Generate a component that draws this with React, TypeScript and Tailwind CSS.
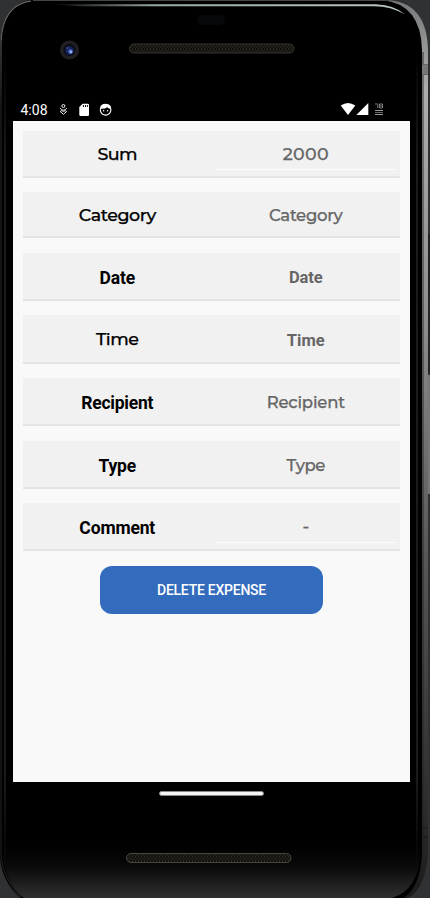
import React from "react";

const geo = "font-['Montserrat','Inter',sans-serif] font-medium [-webkit-text-stroke:0.25px_currentColor]";
const rob = "font-['Roboto',sans-serif] font-bold";

type Row = {
  label: string;
  value: string;
  box: string;
  labelClass: string;
  valueClass: string;
  input?: boolean;
};

const rows: Row[] = [
  { label: "Sum", value: "2000", box: "h-[47px] mb-[14px]", labelClass: `${geo} text-[17.5px] tracking-[-0.5px] pt-[2px]`, valueClass: `${geo} text-[17.5px] tracking-[0.3px]`, input: true },
  { label: "Category", value: "Category", box: "h-[46px] mb-[15px]", labelClass: `${geo} text-[17.5px] tracking-[-0.45px] pt-[2px]`, valueClass: `${geo} text-[16.5px] tracking-[-0.3px] pt-[2px]` },
  { label: "Date", value: "Date", box: "h-[48px] mb-[14px]", labelClass: `${rob} text-[17.5px] tracking-[-0.2px] pt-[4px]`, valueClass: `${rob} text-[16.5px] tracking-[-0.1px] pt-[4px]` },
  { label: "Time", value: "Time", box: "h-[49px] mb-[14px]", labelClass: `${geo} text-[17.5px] tracking-[-0.5px] pt-[1px]`, valueClass: `${rob} text-[16.5px] pt-[5px]` },
  { label: "Recipient", value: "Recipient", box: "h-[48px] mb-[15px]", labelClass: `${rob} text-[17.5px] tracking-[-0.25px] pt-[4px]`, valueClass: `${geo} text-[16.5px] tracking-[-0.2px] pt-[2px]` },
  { label: "Type", value: "Type", box: "h-[48px] mb-[14px]", labelClass: `${rob} text-[17.5px] tracking-[-0.15px] pt-[4px]`, valueClass: `${geo} text-[16.5px] tracking-[-0.4px] pt-[2px]` },
  { label: "Comment", value: "-", box: "h-[48px] mb-[15px]", labelClass: `${rob} text-[17.5px] tracking-[-0.15px] pt-[5px]`, valueClass: `${geo} text-[17.5px]`, input: true },
];

function Device() {
  return (
    <svg className="absolute inset-0" width="430" height="898" viewBox="0 0 430 898" aria-hidden="true">
      <defs>
        <linearGradient id="rim" x1="0" y1="0" x2="0" y2="1">
          <stop offset="0" stopColor="#77797a" />
          <stop offset="0.1" stopColor="#adadad" />
          <stop offset="0.35" stopColor="#8f8f8f" />
          <stop offset="0.6" stopColor="#5a5a5a" />
          <stop offset="0.85" stopColor="#343435" />
          <stop offset="1" stopColor="#1b1b1c" />
        </linearGradient>
        <linearGradient id="chin" x1="0" y1="0" x2="0" y2="1">
          <stop offset="0" stopColor="#000" />
          <stop offset="0.4" stopColor="#090909" />
          <stop offset="1" stopColor="#303030" />
        </linearGradient>
        <linearGradient id="shine" x1="0" y1="0" x2="1" y2="0">
          <stop offset="0" stopColor="#9cabaa" stopOpacity="0" />
          <stop offset="0.3" stopColor="#9cabaa" />
          <stop offset="1" stopColor="#b9c5c3" />
        </linearGradient>
        <linearGradient id="leftRim" x1="0" y1="0" x2="0" y2="1">
          <stop offset="0" stopColor="#777" />
          <stop offset="0.12" stopColor="#222" />
          <stop offset="1" stopColor="#1d1d1f" />
        </linearGradient>
        <linearGradient id="edge" x1="0" y1="0" x2="0" y2="1">
          <stop offset="0" stopColor="#1b1b1b" stopOpacity="0" />
          <stop offset="0.15" stopColor="#1b1b1b" />
          <stop offset="0.88" stopColor="#1b1b1b" />
          <stop offset="1" stopColor="#1b1b1b" stopOpacity="0" />
        </linearGradient>
        <pattern id="mesh" width="3" height="4" patternUnits="userSpaceOnUse">
          <rect width="3" height="4" fill="#12110e" />
          <path d="M.5 0v2M2 2v2" stroke="#343129" strokeWidth="0.8" />
        </pattern>
        <clipPath id="body">
          <path d="M33 2H390Q421 4 422 42V845Q420 890 392 898H24Q3 883 2 845V42Q4 4 33 2Z" />
        </clipPath>
      </defs>
      <rect width="430" height="898" fill="#303133" />
      <rect x="428" y="234" width="2" height="62" fill="#202123" />
      <rect x="428" y="295" width="2" height="78" fill="#242527" />
      <rect x="428" y="375" width="2" height="119" fill="#777" />
      <path d="M33 0H385Q427 1 428 50V855Q425 889 408 898H20Q1 882 0 855V42Q3 4 33 0Z" fill="url(#rim)" />
      <path d="M31 0H382Q421 4 422 50V855Q420 888 403 898H22Q1 882 0 855V42Q3 4 31 0Z" fill="#000" />
      <g clipPath="url(#body)">
        <rect x="0" y="845" width="430" height="53" fill="url(#chin)" />
      </g>
      <path d="M31 1Q2 5 1 43V855Q3 879 21 897" fill="none" stroke="url(#leftRim)" strokeWidth="1.2" />
      <rect x="4" y="45" width="2" height="830" fill="url(#edge)" />
      <rect x="416" y="45" width="2" height="830" fill="url(#edge)" />
      <path d="M33 .5H389" stroke="#444646" strokeWidth="1" />
      <path d="M50 4.2H376Q395 5 405 14.5Q391 6.3 374 6.2H80Z" fill="url(#shine)" />
      <path d="M423 52V850" stroke="#222" strokeOpacity=".45" strokeWidth="2" />
      <rect x="422" y="65" width="6" height="9" fill="#777" />
      <path d="M422 64.5h6M422 74.5h6" stroke="#666" />
      <path d="M422 828h6M422 837h6" stroke="#1b1b1b" />
      <rect x="197" y="15" width="28" height="10" rx="5" fill="#07080c" />
      <circle cx="69.5" cy="50" r="9.5" fill="#202022" />
      <circle cx="69.5" cy="50" r="6" fill="#0a0b13" />
      <circle cx="69.5" cy="50.5" r="4.5" fill="#152154" />
      <circle cx="70.5" cy="51.5" r="2.2" fill="#5674d0" />
      <circle cx="71" cy="52" r="1.1" fill="#b2c4ff" />
      <circle cx="67.5" cy="48" r=".8" fill="#5674d0" />
      <rect x="129.5" y="44" width="164.5" height="9" rx="4.5" fill="url(#mesh)" stroke="#38352f" />
      <rect x="126.5" y="853.5" width="164.5" height="9" rx="4.5" fill="url(#mesh)" stroke="#484640" />
    </svg>
  );
}

function StatusBar() {
  return (
    <div className="flex h-[22px] items-center pl-[7.5px] text-white">
      <span className="w-[36px] font-['Roboto',sans-serif] text-[14px] leading-[22px]">4:08</span>
      <svg width="70" height="22" viewBox="57 99 70 22">
        <circle cx="63.4" cy="106" r="1.5" fill="none" stroke="#eee" />
        <path d="M60 108.2q1.8 2 3.4 2q1.8 0 3.4-2M60.2 111.5l1.3-.8q1.9 1.2 3.8 0l1.4.8-3.3 2.8z" fill="none" stroke="#eee" strokeWidth="1" />
        <path d="M82.7 103.7h5.1q1.2 0 1.2 1.2v9.8q0 1.2-1.2 1.2h-7.3q-1.2 0-1.2-1.2v-7.6z" fill="#fff" />
        <path d="M83.4 105v2M85.5 105v2M87.4 105v2" stroke="#000" strokeWidth=".9" />
        <circle cx="105.6" cy="109.8" r="5.3" fill="none" stroke="#fff" strokeWidth="1.1" />
        <path d="M100.5 108.8V106q2-2.3 5-2.3t5.2 2.3v2.8q-2.3 0-3.4-1.6q-2.5 2-6.8 1.6z" fill="#fff" />
        <circle cx="103.6" cy="110.8" r=".7" fill="#fff" />
        <circle cx="107.6" cy="110.8" r=".7" fill="#fff" />
      </svg>
      <svg className="ml-auto mr-[22px]" width="48" height="22" viewBox="340 99 48 22">
        <path d="M340.7 105.5Q348 100.5 355.3 105.5L348 115z" fill="#fff" />
        <path d="M368.3 103v12h-12z" fill="#fff" />
        <path d="M375 104h2M377.8 103.5v4.5M379.5 104h3v4h-3zM379.5 106h3" fill="none" stroke="#999" strokeWidth=".8" />
        <path d="M375 110.5h8M375 114.5h8" stroke="#999" />
        <path d="M375 112.5h8" stroke="#666" />
      </svg>
    </div>
  );
}

export default function App() {
  return (
    <div className="relative h-[898px] w-[430px] overflow-hidden bg-black">
      <Device />
      <div className="relative flex h-full flex-col pl-[13px] pr-5 pt-[99px]">
        <StatusBar />
        <main className="flex h-[661px] flex-col bg-[#f9f9f9] px-[10px] pt-[10px]">
          {rows.map((row) => (
            <div key={row.label} className={`grid shrink-0 grid-cols-2 border-b-2 border-[#e4e4e4] bg-[#f1f1f1] ${row.box}`}>
              <div className={`flex items-center justify-center text-black ${row.labelClass}`}>{row.label}</div>
              <div className={row.input ? "flex flex-col px-[4px] pb-[6px]" : "flex flex-col"}>
                <div className={`flex flex-1 items-center justify-center text-[#666] ${row.valueClass} ${row.input ? "border-b border-[#fcfcfc] pt-[8px]" : ""}`}>
                  {row.value}
                </div>
              </div>
            </div>
          ))}
          <button className="ml-[77px] h-[48px] w-[223px] shrink-0 rounded-[12px] bg-[#336bbd] pt-px font-['Roboto',sans-serif] text-[14px] font-medium tracking-[-0.25px] text-white">
            DELETE EXPENSE
          </button>
        </main>
        <div className="ml-[146px] mt-[9px] h-[5px] w-[105px] rounded-full border border-[#888] bg-[#f4f4f4]" />
      </div>
    </div>
  );
}
